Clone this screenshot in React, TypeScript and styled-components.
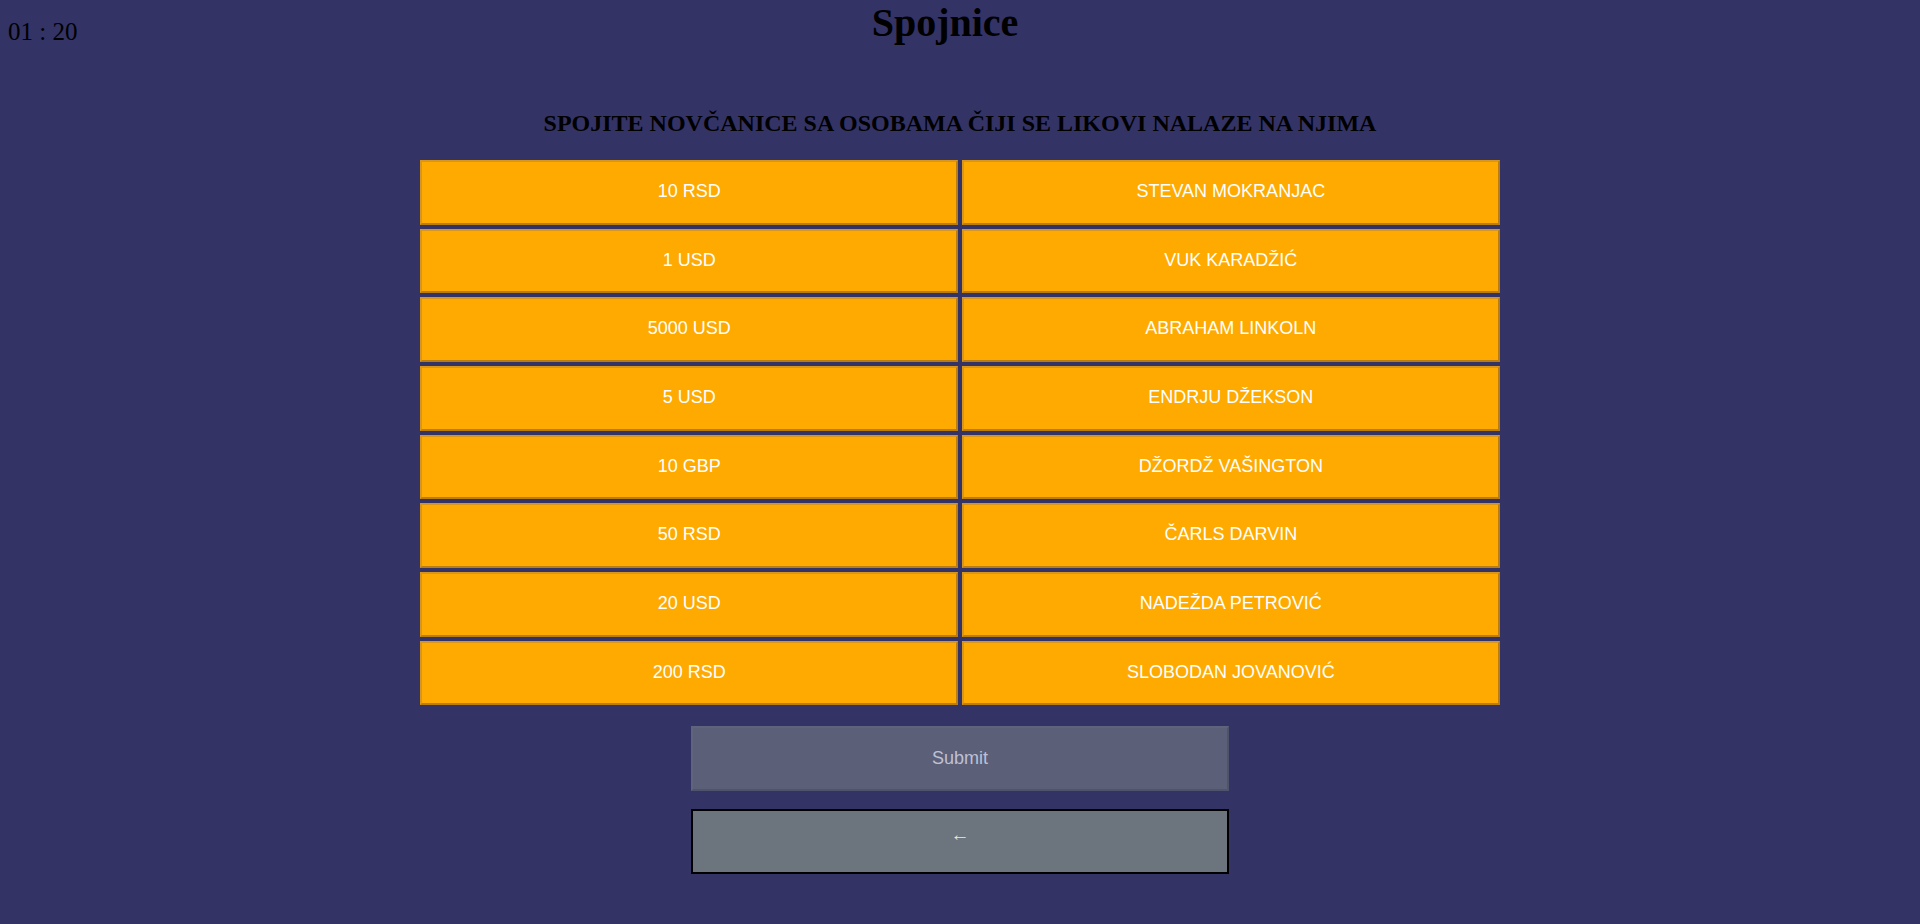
import React from "react";
import styled, { createGlobalStyle } from "styled-components";

const GlobalStyle = createGlobalStyle`
  html, body {
    margin: 0;
    padding: 0;
    background: #333366;
  }
  body {
    font-family: "Liberation Serif", "Times New Roman", serif;
    color: #000;
  }
`;

const Page = styled.div`
  min-height: 100vh;
  background: #333366;
  display: flex;
  flex-direction: column;
`;

const Header = styled.header`
  display: flex;
  align-items: flex-start;
  height: 44px;
  padding: 0 8px;
`;

const Timer = styled.div`
  width: 100px;
  flex: none;
  margin-top: 19px;
  font-family: "Liberation Serif", "Times New Roman", serif;
  font-size: 25px;
  line-height: 25px;
  color: #000;
  white-space: pre;
`;

const Title = styled.h1`
  flex: 1;
  margin: 0;
  padding-right: 130px;
  text-align: center;
  font-family: "Liberation Serif", "Times New Roman", serif;
  font-size: 40px;
  line-height: 45px;
  font-weight: bold;
  color: #000;
`;

const Instruction = styled.h2`
  margin: 65px 0 21px;
  text-align: center;
  font-family: "Liberation Serif", "Times New Roman", serif;
  font-size: 24px;
  line-height: 28px;
  font-weight: bold;
  color: #000;
`;

const Board = styled.div`
  display: grid;
  grid-template-columns: repeat(2, auto);
  justify-content: center;
`;

const Tile = styled.button`
  width: 28vw;
  height: 7vh;
  margin: 2px;
  padding: 0 0 2px;
  background: #ffaa00;
  border-width: 2px;
  border-style: solid;
  border-color: #d8961c #b97d12 #b97d12 #d8961c;
  color: #ffffff;
  font-family: "Liberation Sans", Arial, sans-serif;
  font-size: 18px;
  cursor: pointer;
`;

const Actions = styled.div`
  display: flex;
  flex-direction: column;
  align-items: center;
`;

const SubmitButton = styled.button`
  width: 28vw;
  height: 7vh;
  margin-top: 2vh;
  padding: 0;
  background: #5b6078;
  border-width: 2px;
  border-style: solid;
  border-color: #5f647c #4f546d #4f546d #5f647c;
  color: #bfc0d6;
  font-family: "Liberation Sans", Arial, sans-serif;
  font-size: 18px;
`;

const BackButton = styled.button`
  width: 28vw;
  height: 7vh;
  margin-top: 2vh;
  padding: 0 0 12px;
  background: #6c757d;
  border: 2px solid #000;
  color: #e8e8e8;
  font-family: "Liberation Sans", Arial, sans-serif;
  font-size: 19px;
  cursor: pointer;
`;

const left = ["10 RSD", "1 USD", "5000 USD", "5 USD", "10 GBP", "50 RSD", "20 USD", "200 RSD"];
const right = [
  "STEVAN MOKRANJAC",
  "VUK KARADŽIĆ",
  "ABRAHAM LINKOLN",
  "ENDRJU DŽEKSON",
  "DŽORDŽ VAŠINGTON",
  "ČARLS DARVIN",
  "NADEŽDA PETROVIĆ",
  "SLOBODAN JOVANOVIĆ",
];

export default function App() {
  return (
    <>
      <GlobalStyle />
      <Page>
        <Header>
          <Timer>01 : 20</Timer>
          <Title>Spojnice</Title>
        </Header>
        <Instruction>SPOJITE NOVČANICE SA OSOBAMA ČIJI SE LIKOVI NALAZE NA NJIMA</Instruction>
        <Board>
          {left.map((l, i) => (
            <React.Fragment key={l}>
              <Tile>{l}</Tile>
              <Tile>{right[i]}</Tile>
            </React.Fragment>
          ))}
        </Board>
        <Actions>
          <SubmitButton disabled>Submit</SubmitButton>
          <BackButton>←</BackButton>
        </Actions>
      </Page>
    </>
  );
}
